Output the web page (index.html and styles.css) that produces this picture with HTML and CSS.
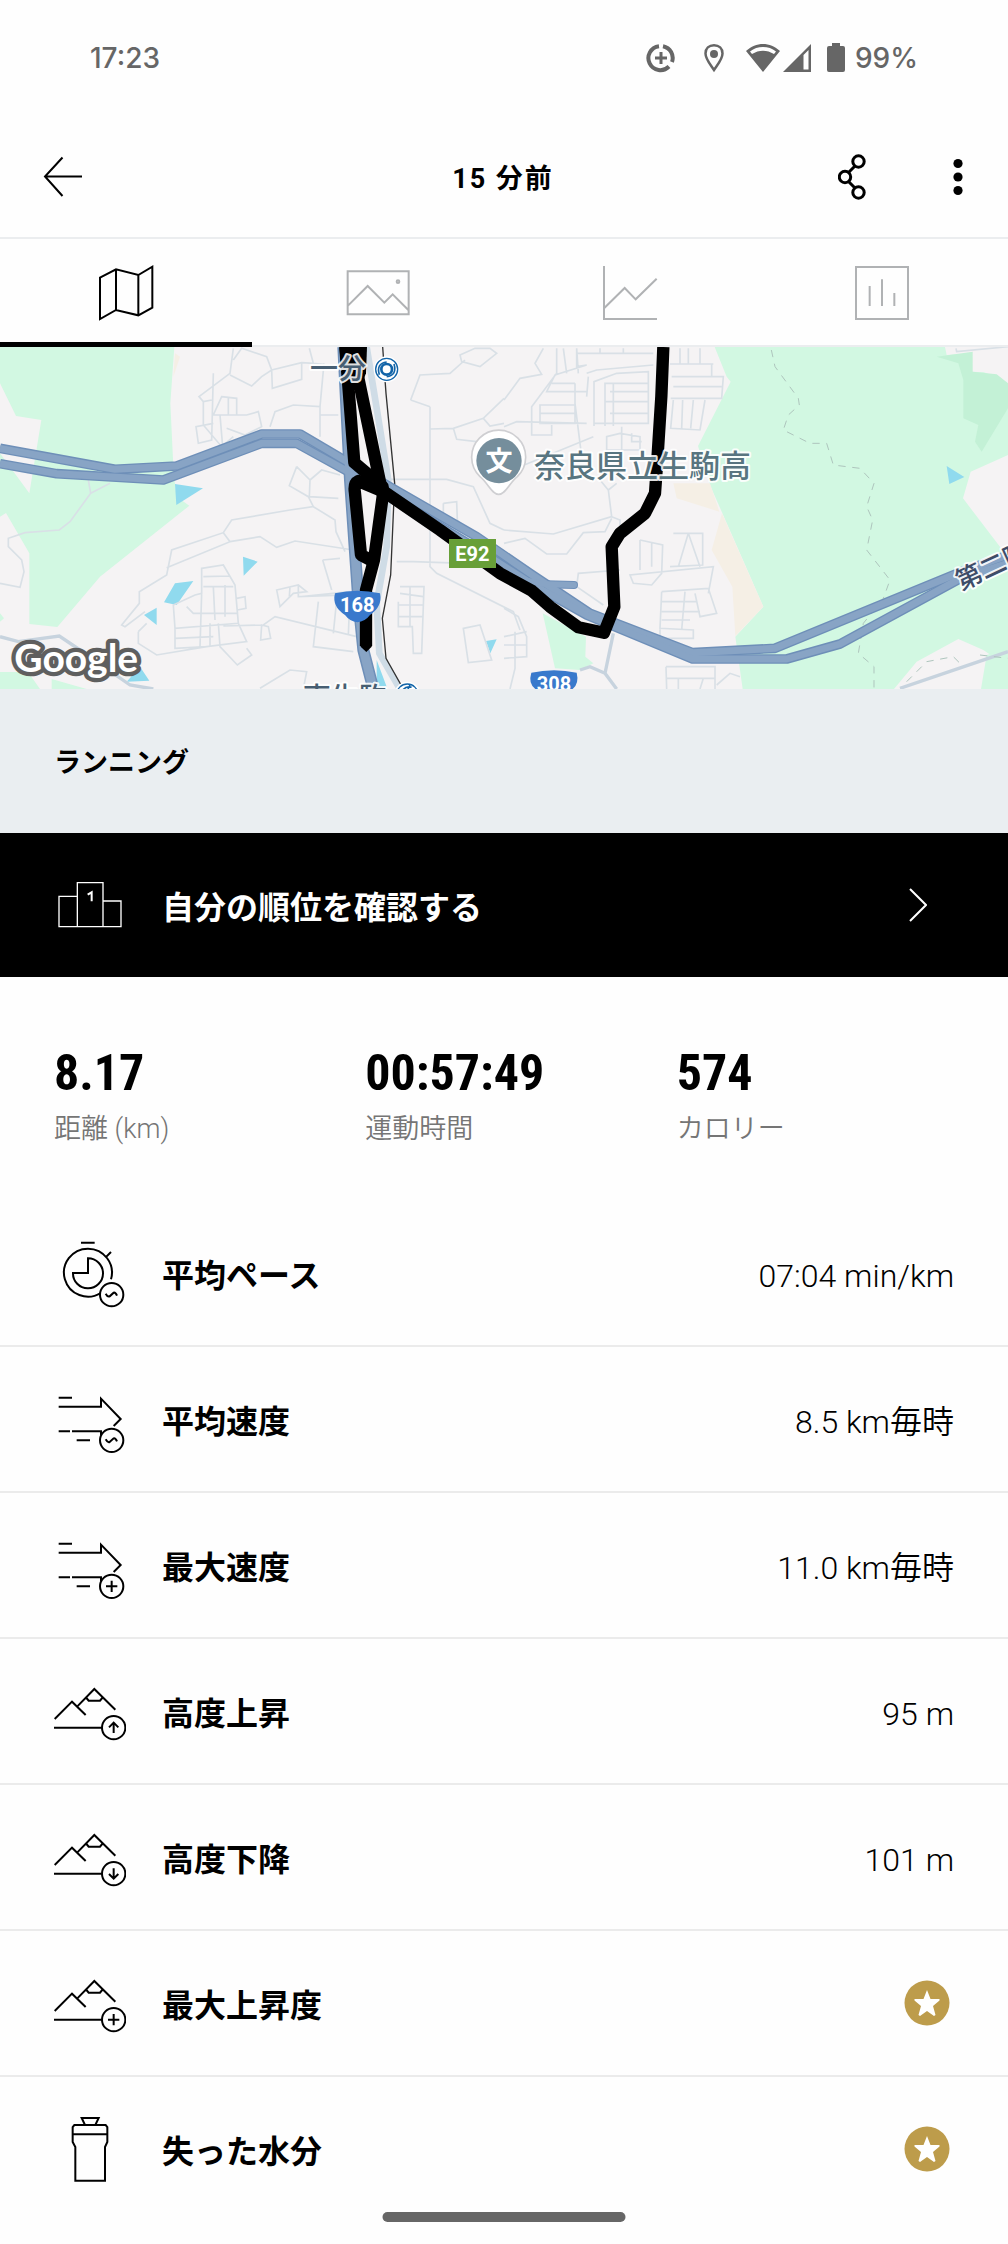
FILE: index.html
```html
<!DOCTYPE html>
<html lang="ja">
<head>
<meta charset="utf-8">
<meta name="viewport" content="width=device-width, initial-scale=1">
<title>ランニング</title>
<link rel="stylesheet" href="styles.css">
</head>
<body>
<svg class="defs" aria-hidden="true">
  <symbol id="arrow-fast" viewBox="162 549 216 216"><path d="M176 593H216M176 620H303V596L362 657L341 678M176 694H210M216 694H303V706M230 721H270"/><circle cx="335" cy="721" r="35"/></symbol>
  <symbol id="mountain" viewBox="0 0 216 216"><path d="M2 132L54 80L95 120M70 94L121 42L184 104M95 66L104 77H138L147 66M0 158H144"/><circle cx="179" cy="158" r="35"/></symbol>
  <symbol id="star" viewBox="0 0 54 54"><circle cx="27" cy="27" r="22.500" fill="#bd9c4b"/><path d="M27 14L30.500 23H39.500V24.500L33 30L35.500 39L34 40L27 35L20 40L18.500 39L21 30L14.500 24.500V23H23.500Z" fill="#fff"/></symbol>
</svg>

<div class="status">
  <time class="clock">17:23</time>
  <div class="status-icons">
    <svg class="ic-saver" viewBox="0 0 30 30" fill="none" stroke="#666" stroke-width="4"><path d="M17 3.200A12 12 0 0 1 26 19M23 23.500A12 12 0 1 1 13 3.200"/><path d="M15 9V21M9 15H21" stroke-width="3"/></svg>
    <svg class="ic-pin" viewBox="0 0 20 30"><path d="M10 2.200C5 2.200 1.500 5.500 1.500 10.500C1.500 16 6 21 10 27C14 21 18.500 16 18.500 10.500C18.500 5.500 15 2.200 10 2.200Z" fill="none" stroke="#666" stroke-width="2.500"/><circle cx="10" cy="11" r="4" fill="#666"/></svg>
    <svg class="ic-wifi" viewBox="0 0 34 30" fill="#666"><path d="M17 1C11 1 5 3.500 0 8L17 29L34 8C29 3.500 23 1 17 1ZM17 4C22 4 26 5.500 30 8.400L28 11C21 6.500 13 6.500 6 11L4 8.400C8 5.500 12 4 17 4Z" fill-rule="evenodd"/></svg>
    <svg class="ic-signal" viewBox="0 0 28 30"><path d="M0 29L28 1V29ZM20.500 12V26.500H25.500V7Z" fill="#666" fill-rule="evenodd"/></svg>
    <svg class="ic-battery" viewBox="0 0 18 30"><path d="M5 0H13V3H16Q18 3 18 5V27Q18 29 16 29H2Q0 29 0 27V5Q0 3 2 3H5Z" fill="#666"/></svg>
    <span class="level">99%</span>
  </div>
</div>

<header class="bar">
  <button class="icon-button" aria-label="戻る"><svg viewBox="0 0 40 42" class="ic-back"><path d="M19.500 1.500L2 20.500L19.500 40M2 20.500H39" fill="none" stroke="#000" stroke-width="2"/></svg></button>
  <h1 class="title">15 分前</h1>
  <div class="actions">
    <button class="icon-button" aria-label="共有"><svg class="ic-share" viewBox="0 0 28 46" fill="none" stroke="#000" stroke-width="3"><path d="M17 12L11 18M11 28L17 34"/><circle cx="20.500" cy="7.500" r="5.700"/><circle cx="7" cy="23" r="5.700"/><circle cx="20.500" cy="38.500" r="5.700"/></svg></button>
    <button class="icon-button" aria-label="メニュー"><svg class="ic-more" viewBox="0 0 10 46"><circle cx="5" cy="9.500" r="4.600"/><circle cx="5" cy="23" r="4.600"/><circle cx="5" cy="36.500" r="4.600"/></svg></button>
  </div>
</header>

<nav class="tabs">
  <button class="tab tab-active" aria-label="地図"><svg class="icon" viewBox="270 771 216 216"><path d="M300 833L348 808L415 825L457 800V923L415 946L348 930L300 957ZM348 808V930M415 825V946"/></svg></button>
  <button class="tab" aria-label="写真"><svg class="icon" viewBox="1026 771 216 216"><path d="M1043 814H1226V943H1043ZM1044 917L1103 858L1153 908L1178 883L1225 930"/><circle cx="1194" cy="845" r="4"/></svg></button>
  <button class="tab" aria-label="グラフ"><svg class="icon" viewBox="270 771 216 216"><path d="M300 798V957H459M301 924L362 864L395 898L458 836"/></svg></button>
  <button class="tab" aria-label="統計"><svg class="icon" viewBox="1026 771 216 216"><path d="M1056 801H1212V957H1056ZM1097 858V918M1134 838V918M1171 879V918"/></svg></button>
</nav>

<svg class="map" viewBox="0 21 3024 1026" role="img" aria-label="ルート地図">
  <rect y="21" width="3024" height="1026" fill="#f5f3f4"/>
  <g fill="#d2f8e2">
    <path d="M0 21H523L511 190L521 400L530 470L568 497L300 710L172 861L88 852V640L18 519L0 530V340L88 460L124 240L48 228L0 130Z"/>
    <path d="M0 996H84L120 1047H0ZM155 1017L260 1047H155ZM0 820L12 835L0 845Z"/>
    <path d="M2144 21H2840L2875 50L2918 80L3024 130V345L2912 395L2889 475L3001 622L3024 640V980L2950 930L2875 897L2750 965L2682 1047H2228L2206 890L2290 800L2242 690L2132 440L2094 318L2192 125L2180 110Z"/>
    <path d="M1628 820L1758 890L1756 950L1780 970L1740 990L1665 985ZM2960 945L3024 925V1047H2943Z"/>
  </g>
  <path d="M2835 21H3024V100L2915 95V40L2840 45Z" fill="#f5f3f4"/>
  <g fill="#f5efe5"><path d="M2020 430H2130L2158 515L2030 475ZM2166 520L2290 800L2206 888L2197 740L2135 630ZM525 40L540 50L520 110Z"/></g>
  <path d="M2810 50L2918 35V95L2990 103L3024 130V205L2945 335L2925 305L2935 255L2890 235V120L2875 70Z" fill="#c3f1d6"/>
  <g fill="#90daee"><path d="M525 432L609 445L529 495ZM729 650L773 665L731 707ZM525 730L580 723L530 795L492 787ZM432 825L470 803V855ZM380 1025L420 980L448 1022ZM1458 903L1490 898L1471 940ZM2840 378L2893 411L2848 432ZM1130 960L1160 1040L1130 1047Z"/></g>
  <g class="streets">
    <path d="M700 25L690 100L597 170L610 185V255L665 320L700 290M665 170L710 175V225H640ZM685 170V225M690 105L755 138L785 110L815 90L905 68L940 70L928 25M700 60L725 25L800 50L815 90L817 145L905 118V68M640 100L635 300L595 310L588 260L640 250M610 185L635 180M635 225H740L775 215L785 260L735 285L680 265M810 260L825 215L880 195L960 200L972 70M960 200V290M960 225H1015M660 225L668 320M940 70L1015 78"/>
    <path d="M265 420L272 460L210 545L178 570L75 578L25 595V620L65 660L72 695L60 742L0 730M272 460L330 430M890 380L868 437L925 470L940 500L870 510L695 540L670 578L515 630L500 705L418 755V790L365 855L375 860L435 815M890 380L930 420L928 470L1015 475M930 420L965 390L1020 405M940 500L1005 540L1008 575L1035 635M670 578L690 605L500 683M690 605L780 590L830 622L885 603L1060 630M968 660L1020 655M968 660L995 750"/>
    <path d="M605 685L670 675L705 735L715 850L525 865L520 795L585 765L605 760ZM610 740H700M610 710L690 708M640 740L645 840M675 735V830M525 865V925L620 920L740 905L715 850M560 800L580 820H715M630 850V920M525 895L640 890M655 850L660 920L712 975L755 945L740 925M605 760L600 920M415 875L440 850M415 875V910L470 945L620 920M712 810L738 805L735 770L710 775M785 855L782 900L812 895L805 860ZM670 858L790 855L825 830L1070 890M830 750L895 735L920 755L880 760L840 800ZM895 735V770L1045 765M905 770L1050 755M1050 760L1045 885M1010 780L1000 880M955 785L940 920L1060 935M870 740L868 770M780 1045L870 990L920 995L910 1047"/>
    <path d="M1190 665L1240 665L1395 670M1200 740H1272L1265 940H1240L1237 860H1195V785M1200 760L1270 770M1195 795H1270M1195 830H1270M1230 740V860M1170 418H1340L1420 440L1470 550L1512 570M1290 200V680L1310 700L1540 815L1560 870M1232 180L1260 105L1350 100L1395 60M1380 45L1425 25L1470 25L1490 40L1440 80L1385 65ZM1232 180L1290 200M1290 267L1360 265L1450 235L1512 175M1360 265L1370 298L1430 305M1450 235L1470 258L1512 250M1330 490L1370 485L1372 540L1405 575M1330 490V545M1390 865L1440 855L1475 960L1405 968Z"/>
    <path d="M1512 180L1560 115L1625 103L1605 70L1630 25M1670 25V100L1595 200V285H1655V255M1690 25L1700 100M1730 25V80L1760 75L1665 105L1640 155H1760M1730 40H1960M1735 100L1730 25M1800 25V40M1870 25V40M1760 100L1790 90L1960 75M1655 130H1725M1620 195H1725V250H1620ZM1620 220H1725M1725 130V250M1760 170L1765 110M1782 258V125L1850 100L1945 95V250H1782M1815 258V130H1945M1830 155H1945M1815 185H1945M1830 220H1945M1840 130V258M1512 260L1550 245L1760 250M1725 190L1745 350M1820 290L1860 280L1920 290V330H1820ZM1865 260V350M1895 280V305H1925"/>
    <path d="M2010 72H2140M2015 110H2170L2165 175H2012M2040 25V72M2065 25V72M2100 25V72M2135 72V110M2020 180L2012 265L2100 270L2115 180M2048 180L2045 265M2080 180L2072 265M2020 140H2165M1800 420L1825 450L1850 430M1825 450L1835 530L1660 582L1512 570M1512 610L1575 595L1640 642H1700L1750 578L1815 575L1835 535M1835 530L1860 540V600M2020 580L2108 580V675L2010 680M2065 580L2035 680M2065 580L2100 680M1920 600L1988 615L1985 700L1955 735L1900 730L1890 705L2140 680L2125 760M1920 600V690M1955 605V680M1730 740L1735 700L1860 690M1730 740L1810 795M1985 755L2125 745L2150 820L2100 830L2085 760M1985 755L1980 865L2080 870V895H1980V865M2055 755L2045 870M1985 785H2090M1985 815H2100M1985 840H2070M1512 805L1555 830L1580 890V950L1512 955M1512 890L1580 875M1512 915H1580M1545 875V985L1530 1047M1998 980H2145V1047M2000 1015H2145M1998 980L2000 1047M2035 1015V1047M2110 1015L2100 1047M2150 1035L2190 1000L2220 1010M1512 385L1560 380L1780 290"/>
    <path d="M2868 25L2870 35L3024 20"/>
  </g>
  <g fill="none" stroke="#c7d3de" stroke-width="10"><path d="M0 890L55 905L178 888L240 930L390 1035L460 1047M1840 880L1815 1000L1850 1047M1740 990L1770 980L1815 1000"/><path d="M1100 21L1165 420L1160 620L1130 790L1138 940L1200 1047" stroke-width="20" stroke="#cfdce6"/></g>
  <path d="M2700 1045L3024 935" fill="none" stroke="#c7d3de" stroke-width="10"/>
  <path d="M2314 30L2325 80L2395 175L2398 195L2365 225L2350 270L2430 310L2480 310L2500 375L2580 385L2622 430L2600 500L2618 540L2600 630L2670 720L2650 775L2590 850L2575 940L2622 980V1047M2720 1025L2780 965L2860 950L2880 970M2940 945L3024 955" fill="none" stroke="#aec5bd" stroke-width="3" stroke-dasharray="22 20"/>
  <path d="M1148 21L1158 160L1184 430L1172 705L1147 835L1158 955L1210 1047" fill="none" stroke="#333" stroke-width="4"/>

  <g fill="none" stroke-linejoin="round">
    <g stroke="#6e8fb8">
      <path d="M0 325L345 388L530 378L785 282H900L1160 435L1430 590L1590 700L1770 820L2078 938L2325 925L2880 697L3024 645" stroke-width="29"/>
      <path d="M0 371L170 401L490 420L785 310H890L1090 420L1420 620L1600 735L1760 825L2078 957H2360L2520 912L2880 716L3024 670" stroke-width="29"/>
      <path d="M1560 718L1640 733L1722 735" stroke-width="24" stroke-linecap="round"/>
      <path d="M1030 21L1050 420L1075 780L1090 930L1120 1047" stroke-width="36"/>
    </g>
    <g stroke="#88a4c5">
      <path d="M0 325L345 388L530 378L785 282H900L1160 435L1430 590L1590 700L1770 820L2078 938L2325 925L2880 697L3024 645" stroke-width="21"/>
      <path d="M0 371L170 401L490 420L785 310H890L1090 420L1420 620L1600 735L1760 825L2078 957H2360L2520 912L2880 716L3024 670" stroke-width="21"/>
      <path d="M1560 718L1640 733L1722 735" stroke-width="18" stroke-linecap="round"/>
      <path d="M1030 21L1050 420L1075 780L1090 930L1120 1047" stroke-width="27"/>
    </g>
    <g stroke="#000" stroke-width="37">
      <path d="M1036 21L1063 368L1148 440V470L1122 660L1098 750V918"/>
      <path d="M1072 100L1145 450L1320 570L1500 700L1595 752L1650 800L1735 862L1812 878L1843 800L1835 620L1860 580L1935 520L1965 460L1972 360L1984 170L1990 21"/>
      <path d="M1150 455L1075 423Q1060 430 1065 460L1083 645L1122 665"/>
      <path d="M1018 21H1101L1098 100L1078 150H1030Z" fill="#000" stroke="none"/>
    </g>
  </g>
  <path d="M1082 915H1115V920L1099 936L1082 920Z"/>

  <g class="labels">
    <text x="930" y="118" font-size="84" fill="#475e72" class="halo">一分</text>
    <text x="1602" y="411" font-size="93" fill="#587580" class="halo">奈良県立生駒高</text>
    <text x="908" y="1104" font-size="84" fill="#475e72" class="halo">東生駒</text>
    <text transform="translate(2884 752) rotate(-25)" font-size="78" fill="#3e4c68" class="halo">第二阪</text>
  </g>
  <g fill="#fff" stroke="#1264a8" stroke-width="4">
    <circle cx="1160" cy="88" r="37" stroke="#fff" stroke-width="4"/><circle cx="1160" cy="88" r="33"/><circle cx="1160" cy="88" r="16" stroke-width="8"/><path d="M1138 104Q1128 70 1160 66M1182 72Q1192 106 1160 110" fill="none" stroke-width="5"/>
    <circle cx="1222" cy="1064" r="37" stroke="#fff"/><circle cx="1222" cy="1064" r="32"/><path d="M1202 1060Q1215 1035 1235 1042M1230 1035L1218 1060" fill="none" stroke-width="5"/>
  </g>
  <path d="M1496 463C1475 463 1465 430 1440 410A81 81 0 1 1 1552 410C1527 430 1517 463 1496 463Z" fill="#fff" stroke="#cfcfd2" stroke-width="5"/>
  <circle cx="1497" cy="362" r="68" fill="#758e9c"/>
  <text x="1497" y="392" class="school">文</text>
  <rect x="1347" y="597" width="141" height="87" fill="#689f38"/>
  <text x="1417" y="662" class="shield">E92</text>
  <path d="M1005 760Q1072 745 1140 760Q1148 800 1110 825Q1095 845 1072 847Q1050 845 1035 825Q995 800 1005 760Z" fill="#3979cc"/>
  <text x="1072" y="816" class="shield">168</text>
  <path d="M1594 998Q1662 983 1730 998Q1738 1030 1718 1047H1606Q1584 1030 1594 998Z" fill="#3979cc"/>
  <text x="1662" y="1052" class="shield">308</text>
  <text x="43" y="996" class="google">Google</text>
</svg>

<section class="activity"><h2 class="activity-name">ランニング</h2></section>

<a class="ranking" href="#ranking">
  <svg class="icon podium" viewBox="162 537 216 216"><path d="M177 619H232V710H177ZM232 578H309V710H232ZM309 633H363V710H309Z"/><path d="M263 614L275 607V634" stroke-width="6"/></svg>
  <span class="name">自分の順位を確認する</span>
  <svg class="chevron" viewBox="0 0 18 34"><path d="M1 1L17 17L1 33" fill="none" stroke="#fff" stroke-width="2"/></svg>
</a>

<dl class="stats">
  <div class="stat"><dt class="stat-label">距離 (km)</dt><dd class="stat-value">8.17</dd></div>
  <div class="stat"><dt class="stat-label">運動時間</dt><dd class="stat-value">00:57:49</dd></div>
  <div class="stat"><dt class="stat-label">カロリー</dt><dd class="stat-value">574</dd></div>
</dl>

<ul class="metrics">
  <li class="metric"><svg class="icon" viewBox="162 111 216 216"><path d="M243 128H284M317 172L333 156M333 238A72 72 0 1 0 302 279M264 175V219H219A45 45 0 1 0 264 175Z"/><circle cx="335" cy="284" r="35"/><path d="M317 281Q323 292 329 289L341 278Q346 276 351 287"/></svg><span class="name">平均ペース</span><span class="value">07:04 min/km</span></li>
  <li class="metric"><svg class="icon" viewBox="0 0 216 216"><use href="#arrow-fast"/><path d="M155 169Q161 180 167 177L179 166Q184 164 189 175"/></svg><span class="name">平均速度</span><span class="value">8.5 km毎時</span></li>
  <li class="metric"><svg class="icon" viewBox="0 0 216 216"><use href="#arrow-fast"/><path d="M156 172H190M173 155V189"/></svg><span class="name">最大速度</span><span class="value">11.0 km毎時</span></li>
  <li class="metric"><svg class="icon" viewBox="0 0 216 216"><use href="#mountain"/><path d="M179 174V143M165 157L179 143L193 157"/></svg><span class="name">高度上昇</span><span class="value">95 m</span></li>
  <li class="metric"><svg class="icon" viewBox="0 0 216 216"><use href="#mountain"/><path d="M179 142V173M165 159L179 173L193 159"/></svg><span class="name">高度下降</span><span class="value">101 m</span></li>
  <li class="metric"><svg class="icon" viewBox="0 0 216 216"><use href="#mountain"/><path d="M162 158H196M179 141V175"/></svg><span class="name">最大上昇度</span><svg class="premium" role="img" aria-label="プレミアム"><use href="#star"/></svg></li>
  <li class="metric"><svg class="icon" viewBox="0 0 216 216"><path d="M83 15H134L124 36H93ZM61 36H155L160 42V87L153 102V203H64V102L56 87V42ZM56 64H160"/></svg><span class="name">失った水分</span><svg class="premium" role="img" aria-label="プレミアム"><use href="#star"/></svg></li>
</ul>
<div class="home-indicator"></div>
</body>
</html>
```
FILE: styles.css
```css
* { box-sizing: border-box; }

body {
  margin: 0;
  min-height: 100vh;
  background: #fefefe;
  color: #000;
  font-family: Roboto, "Noto Sans CJK JP", sans-serif;
}

svg { display: block; flex: none; }
h1, h2, dl, dd, ul { margin: 0; padding: 0; }
button { border: 0; padding: 0; background: none; cursor: pointer; }
.defs { position: absolute; width: 0; height: 0; }

/* Device status bar */
.status {
  display: flex;
  justify-content: space-between;
  align-items: center;
  height: 117px;
  padding: 0 90px 2px;
  color: #666;
  font: 500 28px/34px Inter, sans-serif;
}
.status-icons { display: flex; align-items: center; }
.ic-saver { width: 30px; height: 30px; margin-right: 28px; }
.ic-pin { width: 20px; height: 30px; margin-right: 22px; }
.ic-wifi { width: 34px; height: 30px; margin-right: 3px; }
.ic-signal { width: 28px; height: 30px; margin-right: 16px; }
.ic-battery { width: 18px; height: 30px; margin-right: 10px; }

/* App bar */
.bar {
  display: grid;
  grid-template-columns: 1fr auto 1fr;
  align-items: center;
  height: 122px;
  padding: 0 45px 0 43px;
  border-bottom: 2px solid #ebedef;
}
.icon-button { display: flex; justify-self: start; }
.ic-back { width: 40px; height: 42px; }
.ic-share { width: 28px; height: 46px; }
.ic-more { width: 10px; height: 46px; }
.actions { display: flex; justify-content: flex-end; gap: 87px; }
.title {
  padding-top: 4px;
  font-size: 27px;
  line-height: 40px;
  font-weight: 700;
  letter-spacing: 2px;
}

/* Tabs */
.tabs { display: grid; grid-template-columns: repeat(4, 1fr); height: 108px; }
.tab {
  display: flex;
  justify-content: center;
  align-items: center;
  color: #b0b2b4;
  box-shadow: inset 0 -2px #ebedef;
}
.tab-active { color: #000; box-shadow: inset 0 -5px #000; }

.icon {
  width: 72px;
  height: 72px;
  fill: none;
  stroke: currentColor;
  stroke-width: 6;
}

/* Map */
.map { width: 100%; height: auto; }
.streets { fill: none; stroke: #d9e0e6; stroke-width: 5; }
.labels { font-family: "Noto Sans CJK JP", sans-serif; font-weight: 500; }
.halo { stroke: #fff; stroke-width: 12px; stroke-opacity: 0.9; stroke-linejoin: round; paint-order: stroke; }
.school { fill: #fff; font: 700 81px "Noto Sans CJK JP", sans-serif; text-anchor: middle; }
.shield { fill: #fff; font: 700 60px Roboto, sans-serif; text-anchor: middle; }
.google {
  fill: #fff;
  stroke: #5f5f5f;
  stroke-width: 26px;
  stroke-linejoin: round;
  paint-order: stroke;
  font: 700 117px Lato, sans-serif;
}

/* Activity heading */
.activity {
  display: flex;
  align-items: center;
  height: 144px;
  padding: 4px 54px 0;
  background: #eaeef1;
}
.activity-name { font-size: 27px; line-height: 40px; font-weight: 700; }

/* Ranking link */
.ranking {
  display: flex;
  align-items: center;
  height: 144px;
  padding: 0 81px 0 54px;
  background: #000;
  color: #fff;
  text-decoration: none;
}
.podium { stroke-width: 4; }
.chevron { width: 18px; height: 34px; }

/* Totals */
.stats {
  display: grid;
  grid-template-columns: repeat(3, 1fr);
  height: 224px;
  padding: 64px 20px 0 54px;
}
.stat {
  display: flex;
  flex-direction: column-reverse;
  justify-content: flex-end;
  gap: 4px;
}
.stat-value {
  font: 700 50px/64px "Roboto Condensed", "Open Sans Condensed", Roboto, sans-serif;
}
.stat-label { color: #757575; font-size: 27px; line-height: 40px; font-weight: 350; }

/* Metric list */
.metrics { list-style: none; }
.metric {
  display: flex;
  align-items: center;
  height: 146px;
  padding: 0 54px;
  border-bottom: 2px solid #ebebeb;
}
.metric:last-child { border-bottom-color: transparent; }
.name,
.value { padding-top: 6px; font-size: 32px; line-height: 46px; }
.name { flex: 1; margin-left: 36px; font-weight: 700; }
.value { font-weight: 350; }
.premium { width: 54px; height: 54px; }

.home-indicator {
  position: fixed;
  left: 50%;
  bottom: 22px;
  width: 243px;
  height: 10px;
  transform: translateX(-50%);
  border-radius: 5px;
  background: #666;
}
```
